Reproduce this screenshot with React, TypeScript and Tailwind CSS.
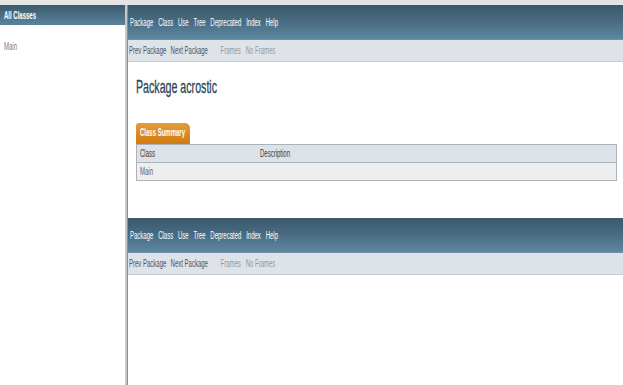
import React from 'react';

// the page was captured horizontally squeezed, so text rows are narrowed with scale-x
const squash = 'w-max origin-left scale-x-[0.6] whitespace-nowrap';

const navItems = ['Package', 'Class', 'Use', 'Tree', 'Deprecated', 'Index', 'Help'];

const TopNav: React.FC = () => (
  <div>
    <div className="h-[35px] flex items-center pl-[2px] pt-[1px] bg-[linear-gradient(to_bottom,#3a596c,#48697f_45%,#5d88a1)] border-b border-[#6f8fa3]">
      <div className={`${squash} flex gap-[8px] text-[10px] text-white`}>
        {navItems.map(item => (
          <span key={item}>{item}</span>
        ))}
      </div>
    </div>
    <div className="h-[22px] flex items-center pl-[1px] bg-[#dee3e9] border-b border-[#c6cbd1]">
      <div className={`${squash} flex text-[10px] text-[#4a5561]`}>
        <span>Prev Package</span>
        <span className="ml-[7px]">Next Package</span>
        <span className="ml-[21px] text-[#8e9aa5]">Frames</span>
        <span className="ml-[8px] text-[#8e9aa5]">No Frames</span>
      </div>
    </div>
  </div>
);

const LeftFrame: React.FC = () => (
  <aside className="w-[125px] shrink-0 bg-white">
    <div className="h-[20px] flex items-center pl-[4px] bg-[linear-gradient(to_bottom,#3a596c,#5a849d)]">
      <div className={`${squash} text-white text-[10px] font-bold`}>All Classes</div>
    </div>
    <div className="pl-[4px] pt-[14px]">
      <div className={`${squash} text-[10px] text-[#7a7a7a]`}>Main</div>
    </div>
  </aside>
);

const App: React.FC = () => {
  return (
    <div className="w-[623px] h-[385px] overflow-hidden bg-white flex flex-col font-['Liberation_Sans',Arial,sans-serif]">
      <div className="h-[5px] bg-[#e4e4e4] shrink-0" />
      <div className="flex flex-1">
        <LeftFrame />
        <div className="w-[3px] bg-[#c8c8c8] border-r border-[#8c8c8c] shrink-0" />
        <main className="flex-1 flex flex-col">
          <TopNav />
          <div className="mt-[14px] ml-[8px] h-[22px] flex items-center">
            <h1 className="w-max origin-left scale-x-[0.56] whitespace-nowrap text-[19px] text-[#2c4557] [-webkit-text-stroke:0.3px_#2c4557]">Package acrostic</h1>
          </div>
          <div className="mt-[25px] ml-[8px] mr-[6px]">
            <div className="w-[54px] h-[21px] rounded-t-[3px] rounded-tr-[5px] bg-[linear-gradient(to_bottom,#e49c38,#d07b10)] flex items-end pb-[4px] pl-[4px]">
              <div className={`${squash} text-[10px] text-white font-bold`}>Class Summary</div>
            </div>
            <div className="border border-[#aab3bd]">
              <div className="h-[18px] flex items-center bg-[#dce2e8] border-b border-[#aab3bd] text-[10px] text-[#3a3a3a]">
                <div className="pl-[3px] w-[123px]">
                  <div className={squash}>Class</div>
                </div>
                <div className={squash}>Description</div>
              </div>
              <div className="h-[17px] flex items-center bg-[#eeeeef] pl-[3px]">
                <div className={`${squash} text-[10px] text-[#4a6782]`}>Main</div>
              </div>
            </div>
          </div>
          <div className="mt-[37px]">
            <TopNav />
          </div>
        </main>
      </div>
    </div>
  );
};

export default App;
